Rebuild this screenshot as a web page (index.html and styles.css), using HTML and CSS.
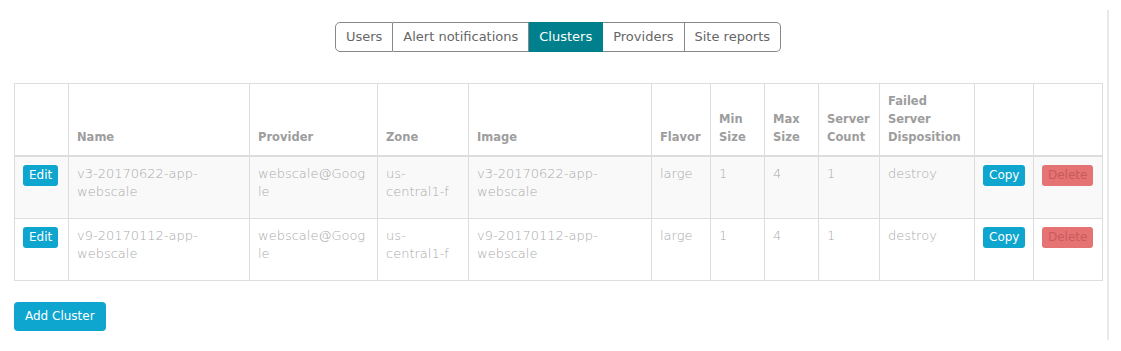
FILE: index.html
```html
<!DOCTYPE html>
<html lang="en">
<head>
    <meta charset="UTF-8">
    <meta name="viewport" content="width=device-width, initial-scale=1.0">
    <title>Clusters</title>
    <link rel="stylesheet" href="styles.css">
</head>
<body>

<div class="frame">
    <nav class="tabs">
        <a href="#users">Users</a>
        <a href="#alerts">Alert notifications</a>
        <a href="#clusters" class="active">Clusters</a>
        <a href="#providers">Providers</a>
        <a href="#reports">Site reports</a>
    </nav>

    <table class="clusters">
        <colgroup>
            <col style="width: 54px">
            <col style="width: 181px">
            <col style="width: 128px">
            <col style="width: 91px">
            <col style="width: 183px">
            <col style="width: 59px">
            <col style="width: 54px">
            <col style="width: 54px">
            <col style="width: 61px">
            <col style="width: 95px">
            <col style="width: 59px">
            <col style="width: 69px">
        </colgroup>
        <thead>
            <tr>
                <th></th>
                <th>Name</th>
                <th>Provider</th>
                <th>Zone</th>
                <th>Image</th>
                <th>Flavor</th>
                <th>Min Size</th>
                <th>Max Size</th>
                <th>Server Count</th>
                <th>Failed Server Disposition</th>
                <th></th>
                <th></th>
            </tr>
        </thead>
        <tbody>
            <tr>
                <td><button class="btn">Edit</button></td>
                <td>v3-20170622-app-webscale</td>
                <td>webscale@Goog<wbr>le</td>
                <td>us-central1-f</td>
                <td>v3-20170622-app-webscale</td>
                <td>large</td>
                <td>1</td>
                <td>4</td>
                <td>1</td>
                <td>destroy</td>
                <td><button class="btn">Copy</button></td>
                <td><button class="btn btn-delete" disabled>Delete</button></td>
            </tr>
            <tr>
                <td><button class="btn">Edit</button></td>
                <td>v9-20170112-app-webscale</td>
                <td>webscale@Goog<wbr>le</td>
                <td>us-central1-f</td>
                <td>v9-20170112-app-webscale</td>
                <td>large</td>
                <td>1</td>
                <td>4</td>
                <td>1</td>
                <td>destroy</td>
                <td><button class="btn">Copy</button></td>
                <td><button class="btn btn-delete" disabled>Delete</button></td>
            </tr>
        </tbody>
    </table>

    <button class="btn btn-add">Add Cluster</button>
</div>

</body>
</html>
```

FILE: styles.css
```css
body {
    font-family: "DejaVu Sans", sans-serif;
    font-size: 13px;
    margin: 0;
    padding: 0;
    background-color: #fff;
    color: #aaa;
}
.frame {
    width: 1088px;
    margin: 10px 0 0 0;
    padding: 12px 5px 9px 14px;
    border-right: 2px solid #e9e9e9;
}
.tabs {
    display: flex;
    justify-content: center;
    margin-bottom: 31px;
}
.tabs a {
    display: block;
    height: 28px;
    line-height: 28px;
    padding: 0 10px;
    color: #666;
    text-decoration: none;
    border: 1px solid #888;
    border-left: none;
}
.tabs a:first-child {
    border-left: 1px solid #888;
    border-radius: 5px 0 0 5px;
}
.tabs a:last-child {
    border-radius: 0 5px 5px 0;
}
.tabs a.active {
    background-color: #00808c;
    border-color: #00808c;
    color: #fff;
}
.clusters {
    width: 1088px;
    table-layout: fixed;
    border-collapse: collapse;
    border: 1px solid #ddd;
    margin-bottom: 21px;
}
.clusters th, .clusters td {
    border: 1px solid #ddd;
    padding: 8px;
    line-height: 18px;
    text-align: left;
    overflow-wrap: break-word;
}
.clusters th {
    vertical-align: bottom;
    border-bottom: 2px solid #ddd;
    color: #9d9d9d;
    font-size: 11.5px;
    font-weight: bold;
    padding-bottom: 9px;
}
.clusters td {
    vertical-align: top;
    font-weight: 300;
}
.clusters tbody tr {
    height: 62px;
}
.clusters tbody tr:nth-child(odd) {
    background-color: #f9f9f9;
}
.btn {
    font-family: inherit;
    font-size: 12px;
    background-color: #0ea5cf;
    color: #fff;
    border: none;
    border-radius: 3px;
    padding: 0 6px;
    height: 21px;
    line-height: 21px;
    cursor: pointer;
}
.btn-delete {
    background-color: #e67373;
    color: #c85b5b;
    cursor: default;
}
.btn-add {
    height: 29px;
    padding: 0 11px;
    border-radius: 4px;
    font-size: 12px;
}
```
